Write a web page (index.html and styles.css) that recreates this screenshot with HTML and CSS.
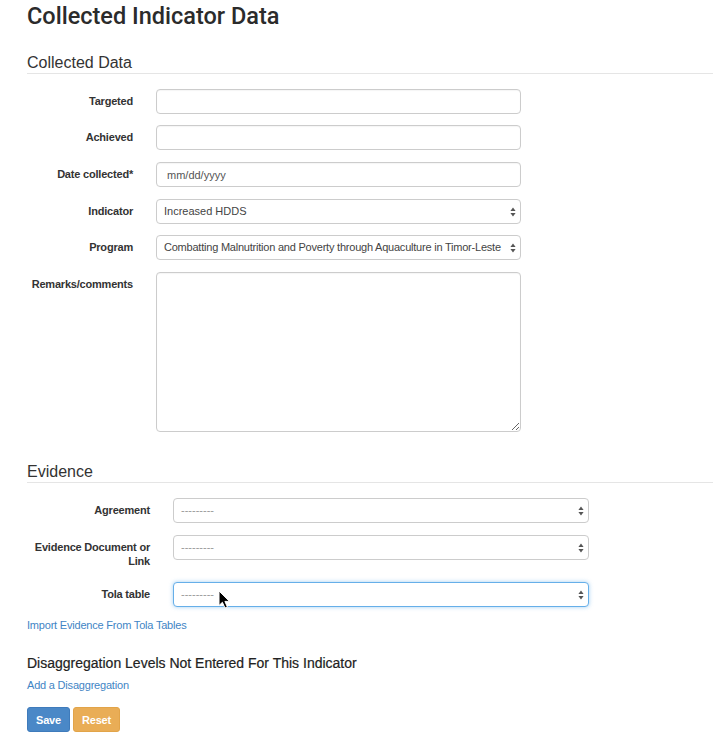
FILE: index.html
```html
<!DOCTYPE html>
<html lang="en">
<head>
<meta charset="utf-8">
<title>Collected Indicator Data</title>
<link rel="stylesheet" href="styles.css">
</head>
<body>
<div class="page">
  <h1 class="title">Collected Indicator Data</h1>
  <form class="form">
    <h3 class="legend legend-first">Collected Data</h3>
    <div class="form-grid grid-data">
      <label class="label" for="targeted">Targeted</label>
      <input class="control" id="targeted" type="text">

      <label class="label" for="achieved">Achieved</label>
      <input class="control" id="achieved" type="text">

      <label class="label" for="date">Date collected*</label>
      <div class="control control-text placeholder-date">mm/dd/yyyy</div>

      <label class="label" for="indicator">Indicator</label>
      <div class="select-wrap">
        <select class="control select" id="indicator"><option>Increased HDDS</option></select>
        <svg class="arrows" width="6" height="10" viewBox="0 0 6 10"><path d="M3 0.5 L5.6 4 L0.4 4 Z M3 9.5 L5.6 6 L0.4 6 Z" fill="#555"/></svg>
      </div>

      <label class="label" for="program">Program</label>
      <div class="select-wrap">
        <select class="control select select-long" id="program"><option>Combatting Malnutrition and Poverty through Aquaculture in Timor-Leste</option></select>
        <svg class="arrows" width="6" height="10" viewBox="0 0 6 10"><path d="M3 0.5 L5.6 4 L0.4 4 Z M3 9.5 L5.6 6 L0.4 6 Z" fill="#555"/></svg>
      </div>

      <label class="label" for="remarks">Remarks/comments</label>
      <textarea class="control textarea" id="remarks"></textarea>
    </div>

    <h3 class="legend legend-evidence">Evidence</h3>
    <div class="form-grid grid-evidence">
      <label class="label" for="agreement">Agreement</label>
      <div class="select-wrap">
        <select class="control select empty" id="agreement"><option>---------</option></select>
        <svg class="arrows" width="6" height="10" viewBox="0 0 6 10"><path d="M3 0.5 L5.6 4 L0.4 4 Z M3 9.5 L5.6 6 L0.4 6 Z" fill="#555"/></svg>
      </div>

      <label class="label label-wrap" for="evidence">Evidence Document or Link</label>
      <div class="select-wrap">
        <select class="control select empty" id="evidence"><option>---------</option></select>
        <svg class="arrows" width="6" height="10" viewBox="0 0 6 10"><path d="M3 0.5 L5.6 4 L0.4 4 Z M3 9.5 L5.6 6 L0.4 6 Z" fill="#555"/></svg>
      </div>

      <label class="label" for="tola">Tola table</label>
      <div class="select-wrap">
        <select class="control select empty focused" id="tola"><option>---------</option></select>
        <svg class="arrows" width="6" height="10" viewBox="0 0 6 10"><path d="M3 0.5 L5.6 4 L0.4 4 Z M3 9.5 L5.6 6 L0.4 6 Z" fill="#555"/></svg>
        <svg class="cursor" width="13" height="19" viewBox="0 0 13 19"><path d="M1 1 L1 15.5 L4.4 12.3 L7 18 L9.4 17 L6.9 11.4 L11.5 11.4 Z" fill="#000" stroke="#fff" stroke-width="1" stroke-linejoin="round"/></svg>
      </div>
    </div>

    <a class="link link-import" href="#">Import Evidence From Tola Tables</a>

    <h4 class="subhead">Disaggregation Levels Not Entered For This Indicator</h4>
    <a class="link link-add" href="#">Add a Disaggregation</a>

    <div class="buttons">
      <button type="button" class="btn btn-save">Save</button>
      <button type="button" class="btn btn-reset">Reset</button>
    </div>
  </form>
</div>
</body>
</html>
```

FILE: styles.css
```css
* { box-sizing: border-box; }

html, body {
  margin: 0;
  padding: 0;
  background: #fff;
}

body {
  font-family: "Liberation Sans", Arial, sans-serif;
  color: #333;
}

.page {
  padding: 0 2px 0 27px;
}

.title {
  margin: 2px 0 0;
  font-family: Roboto, "Liberation Sans", Arial, sans-serif;
  font-size: 23.5px;
  line-height: 28px;
  font-weight: 500;
  color: #2b2b2b;
}

.form {
  display: flex;
  flex-direction: column;
  align-items: flex-start;
}

.legend {
  align-self: stretch;
  margin: 0;
  font-size: 16px;
  line-height: 20px;
  font-weight: normal;
  color: #333;
  border-bottom: 1px solid #e5e5e5;
}

.legend-first { margin-top: 22.5px; }
.legend-evidence { margin-top: 30.3px; }

.form-grid {
  display: grid;
  column-gap: 23px;
  row-gap: 11.6px;
  align-items: start;
  margin-top: 15.4px;
}

.grid-data { grid-template-columns: 106px 365px; }
.grid-evidence { grid-template-columns: 123px 416px; margin-top: 15px; }

.label {
  display: block;
  text-align: right;
  font-size: 11px;
  line-height: 14px;
  font-weight: bold;
  letter-spacing: -0.2px;
  color: #333;
  padding-top: 5px;
  margin-bottom: 2.4px;
}

.control {
  display: block;
  width: 100%;
  height: 25px;
  margin: 0;
  padding: 0 7px;
  font-family: "Liberation Sans", Arial, sans-serif;
  font-size: 11px;
  color: #555;
  background: #fff;
  border: 1px solid #ccc;
  border-radius: 4px;
  box-shadow: inset 0 1px 1px rgba(0,0,0,0.04);
  outline: none;
}

.control-text {
  display: flex;
  align-items: center;
  padding-left: 10px;
  padding-top: 1px;
  color: #555;
}

.select {
  -webkit-appearance: none;
  appearance: none;
  padding-right: 16px;
  line-height: 23px;
  color: #444;
  box-shadow: none;
}

.select-long { letter-spacing: -0.22px; }

.select.empty { color: #999; }

.select.focused {
  border-color: #66afe9;
  box-shadow: 0 0 4px rgba(102,175,233,0.6);
}

.select-wrap {
  position: relative;
}

.arrows {
  position: absolute;
  right: 5px;
  top: 8px;
  pointer-events: none;
}

.cursor {
  position: absolute;
  left: 45px;
  top: 8px;
  pointer-events: none;
}

.textarea {
  height: 160px;
  padding: 6px 7px;
  resize: both;
}

.link {
  font-size: 11px;
  line-height: 14px;
  letter-spacing: -0.2px;
  color: #3f85c5;
  text-decoration: none;
}

.link-import { margin-top: 11.5px; }

.subhead {
  margin: 22.5px 0 0;
  font-size: 14px;
  line-height: 17px;
  font-weight: normal;
  color: #222;
  -webkit-text-stroke: 0.2px #222;
}

.link-add { margin-top: 6.5px; }

.buttons {
  display: flex;
  gap: 3px;
  margin-top: 15px;
}

.btn {
  height: 25px;
  padding: 0 6px;
  font-family: "Liberation Sans", Arial, sans-serif;
  font-size: 11px;
  font-weight: bold;
  letter-spacing: -0.2px;
  color: #fff;
  border: 1px solid transparent;
  border-radius: 3px;
  cursor: pointer;
}

.btn-save {
  width: 43px;
  background: #4a88c7;
  border-color: #3f7bbb;
}

.btn-reset {
  width: 47px;
  background: #e9ad56;
  border-color: #e2a449;
}
```
